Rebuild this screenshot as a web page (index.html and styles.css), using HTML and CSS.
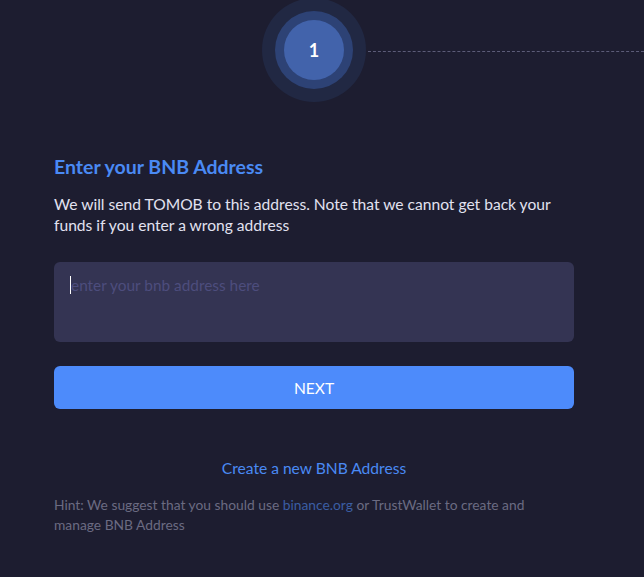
FILE: index.html
```html
<!DOCTYPE html>
<html>
<head>
<meta charset="utf-8">
<link rel="stylesheet" href="styles.css">
</head>
<body>
<div class="page">
  <div class="stepper">
    <div class="step-wrap">
      <div class="ring-outer">
        <div class="ring-mid">
          <div class="ring-inner">1</div>
        </div>
      </div>
    </div>
    <div class="dash"></div>
  </div>
  <div class="content">
    <h2 class="title">Enter your BNB Address</h2>
    <p class="desc">We will send TOMOB to this address. Note that we cannot get back your funds if you enter a wrong address</p>
    <div class="input-box"><span class="caret"></span><span class="placeholder">enter your bnb address here</span></div>
    <button class="btn">NEXT</button>
    <a class="create">Create a new BNB Address</a>
    <p class="hint">Hint: We suggest that you should use <a class="hint-link">binance.org</a> or TrustWallet to create and manage BNB Address</p>
  </div>
</div>
</body>
</html>
```
FILE: styles.css
```css
html, body {
  margin: 0;
  padding: 0;
  background: #1d1d30;
}
body {
  font-family: "Lato", "Open Sans", sans-serif;
  width: 644px;
  height: 577px;
  overflow: hidden;
}
.page {
  position: relative;
}
.stepper {
  position: relative;
  height: 100px;
}
.step-wrap {
  position: absolute;
  left: 262px;
  top: -2px;
}
.ring-outer {
  width: 104px;
  height: 104px;
  border-radius: 50%;
  background: #212843;
  display: flex;
  align-items: center;
  justify-content: center;
}
.ring-mid {
  width: 78px;
  height: 78px;
  border-radius: 50%;
  background: #2d4275;
  display: flex;
  align-items: center;
  justify-content: center;
}
.ring-inner {
  width: 60px;
  height: 60px;
  border-radius: 50%;
  background: #4263ab;
  color: #fff;
  font-weight: 700;
  font-size: 18px;
  display: flex;
  align-items: center;
  justify-content: center;
}
.dash {
  position: absolute;
  left: 368px;
  right: 0;
  top: 51px;
  border-top: 1px dashed #5c5c78;
}
.content {
  padding: 55px 70px 0 54px;
}
.title {
  margin: 0;
  font-size: 19.5px;
  font-weight: 700;
  color: #4a8af4;
  line-height: 24px;
}
.desc {
  margin: 15px 0 0;
  font-size: 15.6px;
  line-height: 21px;
  color: #e2e2f0;
}
.input-box {
  margin-top: 26px;
  height: 80px;
  border-radius: 6px;
  background: #343453;
  padding: 13px 16px;
  box-sizing: border-box;
  display: flex;
  align-items: flex-start;
}
.caret {
  width: 1px;
  height: 18px;
  background: #fff;
  margin-top: 1px;
}
.placeholder {
  color: #4d4d7d;
  font-size: 15.4px;
  line-height: 20px;
}
.btn {
  display: block;
  margin-top: 24px;
  width: 100%;
  height: 43px;
  border: none;
  border-radius: 6px;
  background: #4d8bfb;
  color: #fff;
  font-family: inherit;
  font-size: 15.6px;
}
.create {
  display: block;
  text-align: center;
  margin-top: 49px;
  color: #4a8af4;
  font-size: 15.6px;
  line-height: 20px;
}
.hint {
  margin: 17px 0 0;
  font-size: 13.8px;
  line-height: 20px;
  color: #6b6b82;
}
.hint-link {
  color: #3b5ea3;
}
```
